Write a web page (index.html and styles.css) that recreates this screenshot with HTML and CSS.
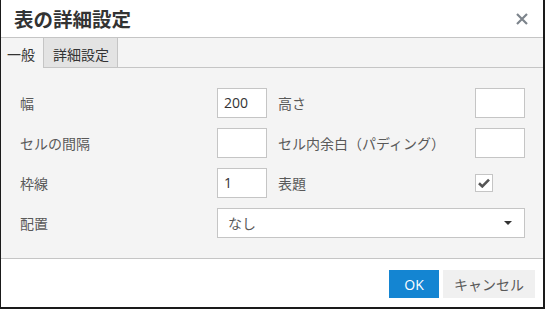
FILE: index.html
```html
<!DOCTYPE html>
<html lang="ja">
<head>
    <meta charset="UTF-8">
    <title>表の詳細設定</title>
    <link rel="stylesheet" href="styles.css">
</head>
<body>
    <div class="dialog">
        <div class="dialog-head">
            <div class="dialog-title">表の詳細設定</div>
            <span class="close">
                <svg width="12" height="12" viewBox="0 0 12 12">
                    <path d="M1 1 L11 11 M11 1 L1 11" stroke="#7d848c" stroke-width="2.2" fill="none"/>
                </svg>
            </span>
        </div>

        <div class="tabs">
            <div class="tab active">一般</div>
            <div class="tab">詳細設定</div>
        </div>

        <div class="dialog-body">
            <div class="form-grid">
                <label class="label">幅</label>
                <div class="input">200</div>
                <label class="label label-right">高さ</label>
                <div class="input"></div>

                <label class="label">セルの間隔</label>
                <div class="input"></div>
                <label class="label label-right">セル内余白（パディング）</label>
                <div class="input"></div>

                <label class="label">枠線</label>
                <div class="input">1</div>
                <label class="label label-right">表題</label>
                <div class="check-cell">
                    <span class="checkbox">
                        <svg width="12" height="10" viewBox="0 0 12 10">
                            <path d="M1 5.2 L4.3 8.4 L11 1.6" stroke="#555" stroke-width="2.6" fill="none"/>
                        </svg>
                    </span>
                </div>

                <label class="label">配置</label>
                <div class="select">
                    <span>なし</span>
                    <span class="caret"></span>
                </div>
            </div>
        </div>

        <div class="dialog-foot">
            <button class="btn btn-primary">OK</button>
            <button class="btn">キャンセル</button>
        </div>
    </div>
</body>
</html>
```

FILE: styles.css
```css
body {
    margin: 0;
    font-family: "Open Sans", "Noto Sans CJK JP", sans-serif;
    font-size: 14px;
    color: #333;
    background: #fff;
}

.dialog {
    width: 545px;
    height: 309px;
    box-sizing: border-box;
    border-left: 1px solid #1a1a1a;
    border-right: 2px solid #1a1a1a;
    border-bottom: 2px solid #1a1a1a;
    display: flex;
    flex-direction: column;
    background: #fff;
}

.dialog-head {
    height: 37px;
    display: flex;
    align-items: center;
    justify-content: space-between;
    padding: 0 15px 0 13px;
    border-bottom: 1px solid #c5c5c5;
}

.dialog-title {
    font-size: 19.5px;
    font-weight: bold;
    color: #333;
}

.close {
    display: flex;
    margin-top: 1px;
}

.tabs {
    display: flex;
    height: 29px;
    background: #f4f4f4;
    border-bottom: 1px solid #c5c5c5;
}

.tab {
    box-sizing: border-box;
    flex-shrink: 0;
    white-space: nowrap;
    height: 29px;
    padding: 7px 9px 0 9px;
    line-height: 20px;
    color: #333;
}

.tab.active {
    width: 42px;
    padding: 7px 0 0 6px;
    height: 30px;
    background: #f4f4f4;
}

.tab + .tab {
    border-left: 1px solid #c5c5c5;
    border-right: 1px solid #c5c5c5;
    background: #e3e3e3;
    width: 75px;
}

.dialog-body {
    flex: 1;
    background: #f4f4f4;
    padding: 20px 0 0 19px;
}

.form-grid {
    display: grid;
    grid-template-columns: 197px 50px 208px 50px;
    grid-auto-rows: 30px;
    row-gap: 10px;
    align-items: center;
}

.label {
    color: #595959;
}

.label-right {
    padding-left: 11px;
}

.input {
    box-sizing: border-box;
    height: 30px;
    border: 1px solid #c5c5c5;
    background: #fff;
    padding: 0 6px;
    line-height: 28px;
    color: #333;
}

.check-cell {
    display: flex;
    align-items: center;
}

.checkbox {
    box-sizing: border-box;
    width: 18px;
    height: 18px;
    border: 1px solid #c5c5c5;
    background: #fff;
    display: flex;
    align-items: center;
    justify-content: center;
}

.select {
    grid-column: 2 / 5;
    box-sizing: border-box;
    height: 30px;
    border: 1px solid #c5c5c5;
    background: #fff;
    display: flex;
    align-items: center;
    justify-content: space-between;
    padding: 0 12px 0 10px;
    color: #595959;
}

.caret {
    width: 0;
    height: 0;
    border-left: 4px solid transparent;
    border-right: 4px solid transparent;
    border-top: 4px solid #333;
}

.dialog-foot {
    height: 49px;
    box-sizing: border-box;
    border-top: 1px solid #c5c5c5;
    display: flex;
    justify-content: flex-end;
    align-items: flex-start;
    gap: 4px;
    padding: 11px 8px 0 0;
}

.btn {
    font-family: inherit;
    font-size: 14px;
    height: 28px;
    border: none;
    background: #f0f0f0;
    color: #595959;
    padding: 0 11px;
    cursor: pointer;
}

.btn-primary {
    background: #1485d2;
    color: #fff;
    width: 50px;
}
```
